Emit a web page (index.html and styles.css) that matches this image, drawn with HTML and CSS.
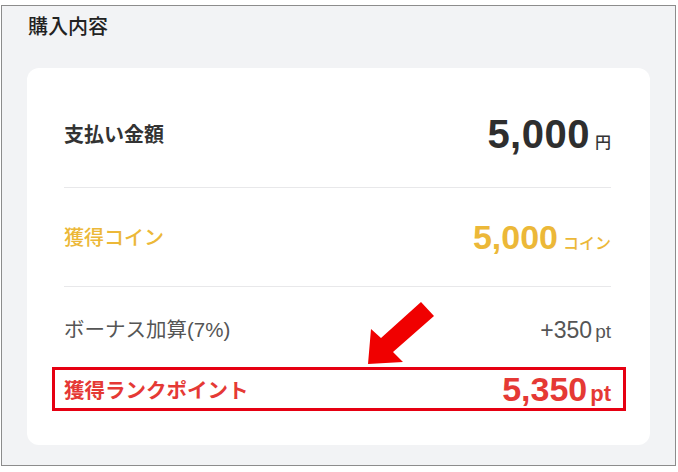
FILE: index.html
```html
<!DOCTYPE html>
<html lang="ja">
<head>
<meta charset="utf-8">
<link rel="stylesheet" href="styles.css">
</head>
<body>
<div class="frame">
  <h2 class="title">購入内容</h2>
  <div class="card">
    <div class="row row-pay">
      <span class="label label-pay">支払い金額</span>
      <span class="amount"><span class="num num-pay">5,000</span><span class="unit unit-pay">円</span></span>
    </div>
    <div class="divider"></div>
    <div class="row row-coin">
      <span class="label label-coin">獲得コイン</span>
      <span class="amount"><span class="num num-coin">5,000</span><span class="unit unit-coin">コイン</span></span>
    </div>
    <div class="divider"></div>
    <div class="row row-bonus">
      <span class="label label-bonus">ボーナス加算(7%)</span>
      <span class="amount"><span class="num num-bonus">+350</span><span class="unit unit-bonus">pt</span></span>
    </div>
    <div class="rank-box">
      <span class="label label-rank">獲得ランクポイント</span>
      <span class="amount"><span class="num num-rank">5,350</span><span class="unit unit-rank">pt</span></span>
    </div>
  </div>
</div>
<svg class="arrow" width="678" height="472" viewBox="0 0 678 472" aria-hidden="true">
  <polygon points="368,364 371,329 381,338 421,302 434,316 393,352 403,362" fill="#f00000"/>
</svg>
</body>
</html>
```

FILE: styles.css
```css
* { box-sizing: border-box; }
html, body { margin: 0; padding: 0; background: #ffffff; }
body {
  position: relative;
  width: 678px;
  height: 472px;
  overflow: hidden;
  font-family: "Liberation Sans", "Noto Sans CJK JP", sans-serif;
  color: #333333;
}
.frame {
  margin: 5px 2px 0 1px;
  height: 461px;
  border: 1px solid #8c8c8c;
  background: #f2f3f5;
  padding: 6px 25px 0 25px;
}
.title {
  margin: 0 0 28px 1px;
  font-family: "Noto Sans CJK JP", sans-serif;
  font-size: 20px;
  line-height: 28px;
  font-weight: 500;
  color: #222222;
}
.card {
  height: 377px;
  background: #ffffff;
  border-radius: 12px;
  padding: 0 39px 0 37px;
}
.row {
  display: flex;
  justify-content: space-between;
  align-items: center;
}
.row-pay { height: 119px; padding-top: 12px; }
.row-coin { height: 98px; }
.row-bonus { height: 80px; padding-top: 6px; }
.divider { height: 1px; background: #e8e8ea; }
.label {
  font-family: "Noto Sans CJK JP", sans-serif;
  font-size: 20px;
  line-height: 1;
}
.label-pay { font-weight: 700; color: #333333; }
.label-coin { font-weight: 500; color: #ecb838; }
.label-bonus { font-weight: 400; color: #555555; font-family: "Liberation Sans", "Noto Sans CJK JP", sans-serif; font-size: 20.5px; }
.label-rank { font-weight: 700; color: #e53935; font-size: 20.5px; }
.amount { display: flex; align-items: baseline; line-height: 1; }
.num { font-weight: 700; }
.num-pay { font-size: 40px; color: #2e2e2e; letter-spacing: 0.5px; }
.unit-pay { font-family: "Noto Sans CJK JP", sans-serif; font-size: 16px; margin-left: 5px; color: #333333; font-weight: 500; }
.num-coin { font-size: 34px; color: #ecb838; }
.unit-coin { font-family: "Noto Sans CJK JP", sans-serif; font-size: 16px; margin-left: 5px; color: #ecb838; font-weight: 500; }
.num-bonus { font-size: 23px; font-weight: 400; color: #555555; }
.unit-bonus { font-size: 19px; margin-left: 3px; color: #555555; }
.num-rank { font-size: 34px; color: #e53935; }
.unit-rank { font-size: 22px; font-weight: 700; margin-left: 3px; color: #e53935; }
.rank-box {
  display: flex;
  justify-content: space-between;
  align-items: center;
  height: 44px;
  margin: 0 -15px 0 -12px;
  border: 3px solid #e60012;
  padding: 0 12px 0 9px;
}
.arrow {
  position: absolute;
  left: 0;
  top: 0;
  pointer-events: none;
}
```
